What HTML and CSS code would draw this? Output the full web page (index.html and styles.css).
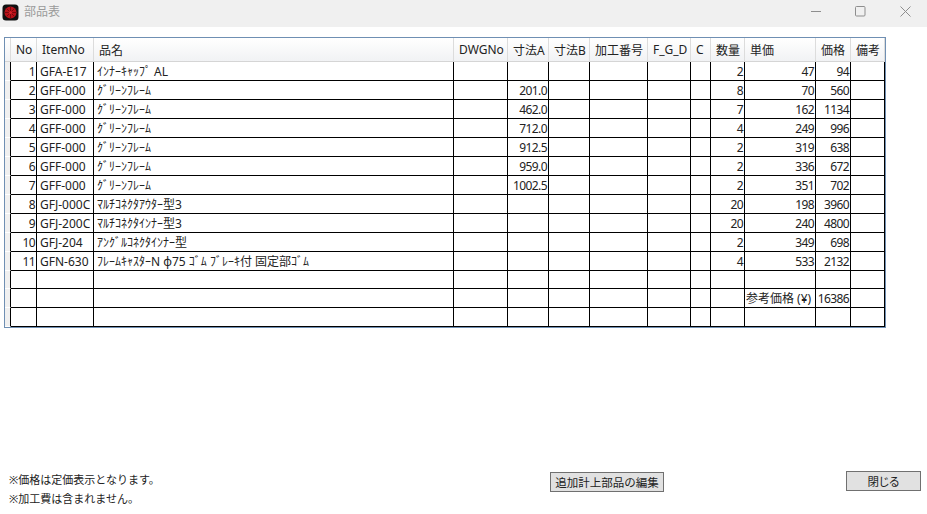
FILE: index.html
```html
<!DOCTYPE html>
<html lang="ja">
<head>
<meta charset="utf-8">
<title>部品表</title>
<link rel="stylesheet" href="styles.css">
</head>
<body>
<header class="titlebar">
  <svg class="app-icon" width="17" height="17" viewBox="0 0 17 17">
    <rect x="0.5" y="0.5" width="16" height="16" rx="3.5" fill="#111"/>
    <circle cx="8.5" cy="8.5" r="6" fill="#b8121a"/>
    <g stroke="#6a0709" stroke-width="0.8" fill="none">
      <path d="M8.5 3v11M3 8.5h11M4.6 4.6l7.8 7.8M12.4 4.6l-7.8 7.8"/>
    </g>
    <circle cx="8.5" cy="8.5" r="1.6" fill="#d8232a"/>
  </svg>
  <span class="title">部品表</span>
  <div class="window-controls">
    <svg width="12" height="12" viewBox="0 0 12 12"><path d="M1 5.5h10" stroke="#8e8e8e" fill="none"/></svg>
    <svg width="12" height="12" viewBox="0 0 12 12"><rect x="0.5" y="0.5" width="9.5" height="9.5" rx="1" stroke="#8e8e8e" fill="none"/></svg>
    <svg width="12" height="12" viewBox="0 0 12 12"><path d="M0.5 0.5l10 10M10.5 0.5l-10 10" stroke="#8e8e8e" fill="none"/></svg>
  </div>
</header>
<main class="content">
  <div class="grid-frame">
    <table class="grid">
      <colgroup>
        <col class="c-gutter"><col class="c-no"><col class="c-item"><col class="c-name"><col class="c-dwg"><col class="c-a"><col class="c-b"><col class="c-proc"><col class="c-fgd"><col class="c-c"><col class="c-qty"><col class="c-unit"><col class="c-price"><col class="c-note">
      </colgroup>
      <thead>
        <tr><th class="gutter"></th><th>No</th><th>ItemNo</th><th>品名</th><th>DWGNo</th><th>寸法A</th><th>寸法B</th><th>加工番号</th><th>F_G_D</th><th>C</th><th>数量</th><th>単価</th><th>価格</th><th>備考</th></tr>
      </thead>
      <tbody>
        <tr><td class="gutter"></td><td class="num">1</td><td>GFA-E17</td><td class="name">ｲﾝﾅｰｷｬｯﾌﾟ AL</td><td></td><td></td><td></td><td></td><td></td><td></td><td class="num">2</td><td class="num">47</td><td class="num">94</td><td></td></tr>
        <tr><td class="gutter"></td><td class="num">2</td><td>GFF-000</td><td class="name">ｸﾞﾘｰﾝﾌﾚｰﾑ</td><td></td><td class="num">201.0</td><td></td><td></td><td></td><td></td><td class="num">8</td><td class="num">70</td><td class="num">560</td><td></td></tr>
        <tr><td class="gutter"></td><td class="num">3</td><td>GFF-000</td><td class="name">ｸﾞﾘｰﾝﾌﾚｰﾑ</td><td></td><td class="num">462.0</td><td></td><td></td><td></td><td></td><td class="num">7</td><td class="num">162</td><td class="num">1134</td><td></td></tr>
        <tr><td class="gutter"></td><td class="num">4</td><td>GFF-000</td><td class="name">ｸﾞﾘｰﾝﾌﾚｰﾑ</td><td></td><td class="num">712.0</td><td></td><td></td><td></td><td></td><td class="num">4</td><td class="num">249</td><td class="num">996</td><td></td></tr>
        <tr><td class="gutter"></td><td class="num">5</td><td>GFF-000</td><td class="name">ｸﾞﾘｰﾝﾌﾚｰﾑ</td><td></td><td class="num">912.5</td><td></td><td></td><td></td><td></td><td class="num">2</td><td class="num">319</td><td class="num">638</td><td></td></tr>
        <tr><td class="gutter"></td><td class="num">6</td><td>GFF-000</td><td class="name">ｸﾞﾘｰﾝﾌﾚｰﾑ</td><td></td><td class="num">959.0</td><td></td><td></td><td></td><td></td><td class="num">2</td><td class="num">336</td><td class="num">672</td><td></td></tr>
        <tr><td class="gutter"></td><td class="num">7</td><td>GFF-000</td><td class="name">ｸﾞﾘｰﾝﾌﾚｰﾑ</td><td></td><td class="num">1002.5</td><td></td><td></td><td></td><td></td><td class="num">2</td><td class="num">351</td><td class="num">702</td><td></td></tr>
        <tr><td class="gutter"></td><td class="num">8</td><td>GFJ-000C</td><td class="name">ﾏﾙﾁｺﾈｸﾀｱｳﾀｰ型3</td><td></td><td></td><td></td><td></td><td></td><td></td><td class="num">20</td><td class="num">198</td><td class="num">3960</td><td></td></tr>
        <tr><td class="gutter"></td><td class="num">9</td><td>GFJ-200C</td><td class="name">ﾏﾙﾁｺﾈｸﾀｲﾝﾅｰ型3</td><td></td><td></td><td></td><td></td><td></td><td></td><td class="num">20</td><td class="num">240</td><td class="num">4800</td><td></td></tr>
        <tr><td class="gutter"></td><td class="num">10</td><td>GFJ-204</td><td class="name">ｱﾝｸﾞﾙｺﾈｸﾀｲﾝﾅｰ型</td><td></td><td></td><td></td><td></td><td></td><td></td><td class="num">2</td><td class="num">349</td><td class="num">698</td><td></td></tr>
        <tr><td class="gutter"></td><td class="num">11</td><td>GFN-630</td><td class="name">ﾌﾚｰﾑｷｬｽﾀｰN φ75 ｺﾞﾑ ﾌﾞﾚｰｷ付 固定部ｺﾞﾑ</td><td></td><td></td><td></td><td></td><td></td><td></td><td class="num">4</td><td class="num">533</td><td class="num">2132</td><td></td></tr>
        <tr class="short"><td class="gutter"></td><td></td><td></td><td></td><td></td><td></td><td></td><td></td><td></td><td></td><td></td><td></td><td></td><td></td></tr>
        <tr><td class="gutter"></td><td></td><td></td><td></td><td></td><td></td><td></td><td></td><td></td><td></td><td></td><td class="label">参考価格 (¥)</td><td class="num">16386</td><td></td></tr>
        <tr><td class="gutter"></td><td></td><td></td><td></td><td></td><td></td><td></td><td></td><td></td><td></td><td></td><td></td><td></td><td></td></tr>
      </tbody>
    </table>
  </div>
  <footer class="footer">
    <div class="notes">
      <p>※価格は定価表示となります。</p>
      <p>※加工費は含まれません。</p>
    </div>
    <button class="btn btn-edit" type="button">追加計上部品の編集</button>
    <button class="btn btn-close" type="button">閉じる</button>
  </footer>
</main>
</body>
</html>
```

FILE: styles.css
```css
* { box-sizing: border-box; }
html, body { margin: 0; padding: 0; }
body {
  width: 927px;
  height: 514px;
  overflow: hidden;
  background: #fff;
  color: #222;
  font-family: "Noto Sans", "Noto Sans CJK JP", sans-serif;
  font-size: 12px;
  display: flex;
  flex-direction: column;
}
.titlebar {
  height: 27px;
  flex: none;
  background: #f0f0f0;
  display: flex;
  align-items: center;
  padding: 0 10px 3px 2px;
}
.app-icon { flex: none; }
.title {
  margin: 0 0 3px 5px;
  font-family: "Noto Sans CJK JP", sans-serif;
  font-size: 12px;
  color: #9a9a9a;
}
.window-controls {
  margin-left: auto;
  display: flex;
  gap: 33px;
  margin-right: 5px;
}
.content {
  flex: 1;
  display: flex;
  flex-direction: column;
  padding: 10px 0 0 4px;
}
.grid-frame {
  width: 882px;
  border: 1px solid #6f8fb3;
}
.grid {
  table-layout: fixed;
  border-collapse: separate;
  border-spacing: 0;
  width: 880px;
}
.c-gutter { width: 6px; }
.c-no { width: 26px; }
.c-item { width: 57px; }
.c-name { width: 360px; }
.c-dwg { width: 54px; }
.c-a { width: 41px; }
.c-b { width: 41px; }
.c-proc { width: 58px; }
.c-fgd { width: 43px; }
.c-c { width: 20px; }
.c-qty { width: 34px; }
.c-unit { width: 71px; }
.c-price { width: 35px; }
.c-note { width: 34px; }
.grid th {
  height: 24px;
  padding: 0 0 0 5px;
  font-weight: 400;
  text-align: left;
  white-space: nowrap;
  overflow: hidden;
  background: linear-gradient(#ffffff, #f1f2f4);
  border-right: 1px solid #dcdcdc;
  border-bottom: 1px solid #d5d5d5;
}
.grid td {
  height: 19px;
  padding: 0 1px 0 3px;
  line-height: 17px;
  white-space: nowrap;
  overflow: hidden;
  border-right: 1px solid #000;
  border-bottom: 1px solid #000;
}
.grid tr.short td { height: 18px; }
.grid td.num {
  text-align: right;
  padding: 0 1px 0 0;
  letter-spacing: -0.6px;
}
.grid td.label { padding-left: 1px; }
.grid td.gutter {
  padding: 0;
  background: #f0f0f0;
  border-right: 1px solid #000;
  border-bottom: 1px solid #fff;
}
.grid th.gutter { padding: 0; }
.footer {
  margin-top: auto;
  display: flex;
  align-items: flex-start;
  padding: 0 0 6px 5px;
}
.notes {
  width: 541px;
}
.notes p {
  margin: 0;
  height: 19px;
  line-height: 19px;
  font-size: 11px;
}
.btn {
  height: 20px;
  padding: 0;
  border: 1px solid #707070;
  background: #e1e1e1;
  color: #222;
  font-family: "Noto Sans CJK JP", sans-serif;
  font-size: 11.5px;
  line-height: 18px;
}
.btn-edit { width: 114px; margin-top: 2px; }
.btn-close {
  width: 75px;
  margin-top: 1px;
  margin-left: 182px;
  font-feature-settings: "palt";
}
```
